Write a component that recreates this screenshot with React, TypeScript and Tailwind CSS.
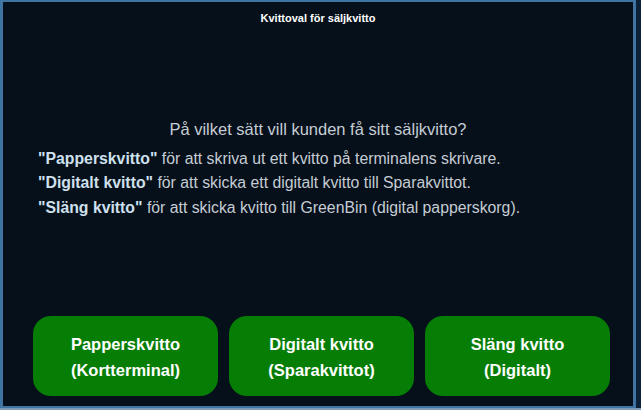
import type { ReactElement } from "react";

const options = [
  { title: "Papperskvitto", sub: "(Kortterminal)" },
  { title: "Digitalt kvitto", sub: "(Sparakvittot)" },
  { title: "Släng kvitto", sub: "(Digitalt)" },
];

const lines = [
  { bold: '"Papperskvitto"', rest: " för att skriva ut ett kvitto på terminalens skrivare." },
  { bold: '"Digitalt kvitto"', rest: " för att skicka ett digitalt kvitto till Sparakvittot." },
  { bold: '"Släng kvitto"', rest: " för att skicka kvitto till GreenBin (digital papperskorg)." },
];

export default function App(): ReactElement {
  return (
    <div
      className="flex h-[410px] w-[641px] flex-col bg-[#7f9bb5]"
      style={{ fontFamily: '"Liberation Sans", Arial, sans-serif' }}
    >
      <div className="flex h-[408px] w-[641px] bg-[#0b2238]">
        <div className="flex h-[408px] w-[636px] flex-col border-x-[3px] border-t-2 border-b-2 border-[#3f74a3] bg-[#05101b]">
          <p className="pt-[8px] text-center text-[11px] font-bold text-white">
            Kvittoval för säljkvitto
          </p>

          <p className="mt-[92px] text-center text-[16.5px] leading-[20px] text-[#c5ccd3]">
            På vilket sätt vill kunden få sitt säljkvitto?
          </p>

          <div className="mt-[10px] flex flex-col gap-[5px] pl-[35px] text-[15.8px] leading-[19.5px] text-[#c5ccd3]">
            {lines.map((line) => (
              <p key={line.bold}>
                <span className="font-bold text-[#cfe0ee]">{line.bold}</span>
                {line.rest}
              </p>
            ))}
          </div>

          <div className="mt-auto mb-[10px] flex gap-[11px] pl-[30px]">
            {options.map((option) => (
              <button
                key={option.title}
                className="flex h-[80px] w-[185px] flex-col items-center justify-center gap-[7px] rounded-[18px] bg-[#067d05] pt-[2px] text-[16.5px] font-bold leading-[19px] text-white"
              >
                <span>{option.title}</span>
                <span>{option.sub}</span>
              </button>
            ))}
          </div>
        </div>
      </div>
    </div>
  );
}
